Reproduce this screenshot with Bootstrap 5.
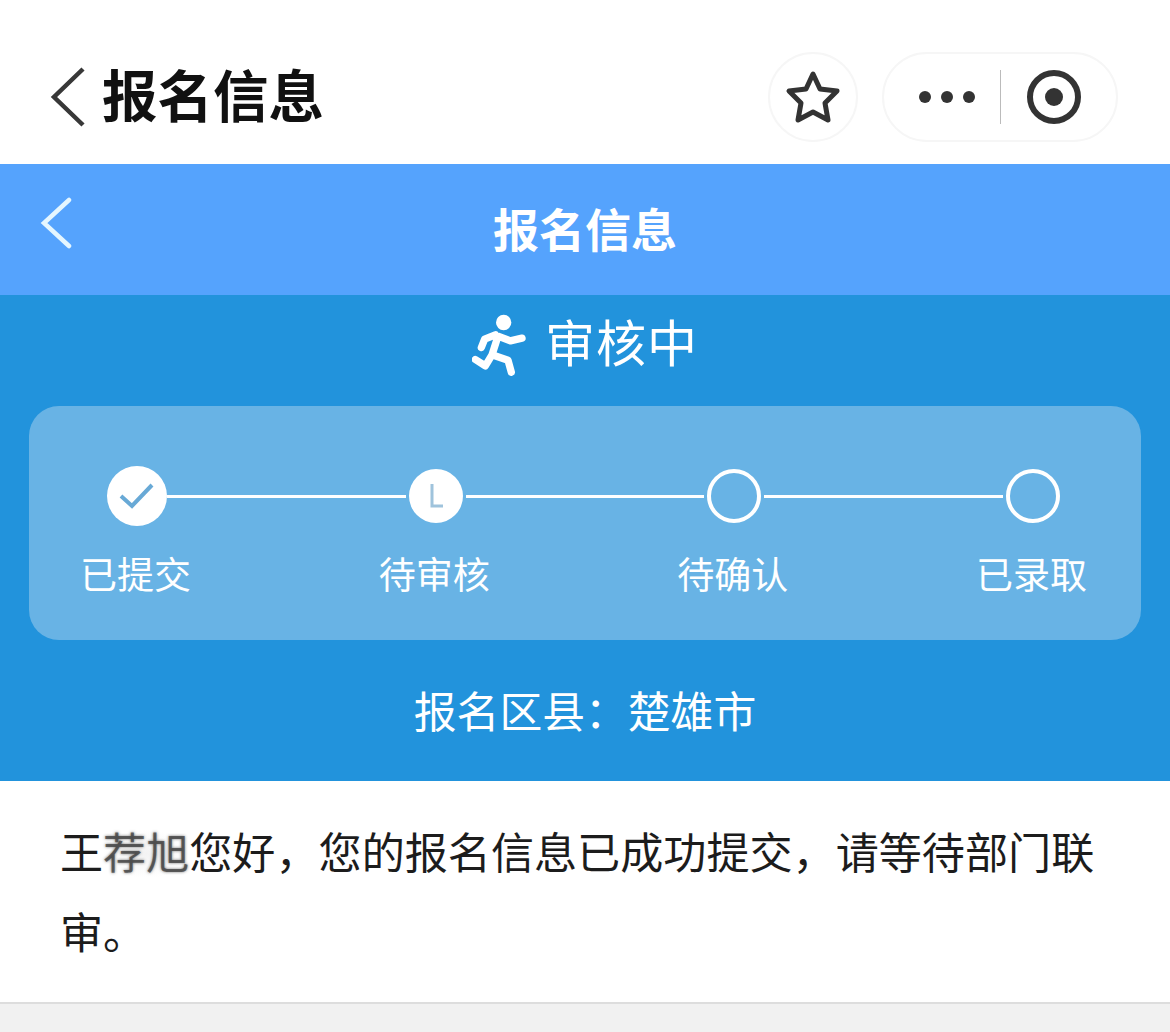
<!doctype html>
<html lang="zh-CN">
<head>
<meta charset="utf-8">
<title>报名信息</title>
<link href="https://cdn.jsdelivr.net/npm/bootstrap@5.3.0/dist/css/bootstrap.min.css" rel="stylesheet">
<style>
body{font-family:"Liberation Sans","Noto Sans CJK SC",sans-serif;color:#1c1c1c;background:#f1f1f1}
.wx-bar{height:164px;padding:30px 52px 0 50px;background:#fff}
.wx-back{width:36px;height:60px;margin-right:16px}
.wx-title{font-size:55.5px;line-height:66px;color:#111;margin-top:2px}
.wx-star{width:90px;height:90px;border:2px solid #f6f6f6;margin-right:24px}
.wx-capsule{width:236px;height:90px;border:2px solid #f6f6f6;border-radius:45px}
.hd-bar{height:131px;background:#55a3fd;display:grid;grid-template-columns:1fr auto 1fr;align-items:center}
.hd-title{font-size:46px;line-height:54px;padding-top:2px}
.hd-back{width:34px;height:52px;margin-top:-13px;margin-left:40px}
.st-panel{height:486px;background:#2293dc}
.st-head{height:111px;padding-bottom:12px;gap:18px;font-size:50px;line-height:60px;letter-spacing:1px}
.st-card{margin:0 29px;height:234px;border-radius:30px;background:#68b3e5;padding:60px 54px 0 51px}
.st-dots{height:60px;padding:0 27px;margin-bottom:29px}
.st-node{flex:none;width:60px;height:60px}
.st-node-sm{flex:none;width:54px;height:54px}
.st-ring{flex:none;width:54px;height:54px;border:4px solid #fff;background:transparent}
.st-line{flex:1 1 auto;height:3px;background:#fff;margin:0 3px}
.st-line-first{margin-left:0}
.st-labels{font-size:37px;line-height:44px}
.st-area{height:141px;padding-top:5px;font-size:42.8px;line-height:50px}
.msg{background:#fff;padding:33px 60px 29px 60px;font-size:43.1px;line-height:80px;height:223px;border-bottom:2px solid #ddd}
.msg-blur{color:rgba(60,60,60,.75);text-shadow:0 0 3px rgba(60,60,60,.7);background:radial-gradient(closest-side,#f3f3f3,#fff)}
.rest{background:#f1f1f1}
</style>
</head>
<body class="d-flex flex-column vh-100 overflow-hidden m-0">
<header class="wx-bar d-flex align-items-center justify-content-between flex-shrink-0">
  <div class="d-flex align-items-center">
    <svg class="wx-back" viewBox="0 0 36 60" fill="none" stroke="#383838" stroke-width="4.5"><path d="M33 2 4 30 33 58"/></svg>
    <span class="wx-title fw-bold">报名信息</span>
  </div>
  <div class="d-flex align-items-center">
    <div class="wx-star rounded-circle d-flex align-items-center justify-content-center">
      <svg width="56" height="54" viewBox="0 0 56 54" fill="none" stroke="#333" stroke-width="5" stroke-linejoin="round"><path d="M28 4 35 19 52 21 40 33 43 50 28 42 13 50 16 33 4 21 21 19Z"/></svg>
    </div>
    <div class="wx-capsule d-flex align-items-center">
      <svg width="232" height="56" viewBox="0 0 232 56" fill="#333"><circle cx="41" cy="28" r="6"/><circle cx="63" cy="28" r="6"/><circle cx="85" cy="28" r="6"/><rect x="116" y="1" width="1" height="54" fill="#bbb"/><circle cx="170" cy="28" r="24" fill="none" stroke="#333" stroke-width="6"/><circle cx="170" cy="28" r="9"/></svg>
    </div>
  </div>
</header>

<div class="hd-bar text-white flex-shrink-0">
  <svg class="hd-back" viewBox="0 0 34 52" fill="none" stroke="#e4f6ff" stroke-width="4.5" stroke-linecap="round"><path d="M29 3 4 26 29 49"/></svg>
  <div class="hd-title fw-bold">报名信息</div>
  <div></div>
</div>

<section class="st-panel text-white flex-shrink-0">
  <div class="st-head d-flex align-items-center justify-content-center">
    <svg width="55" height="62" viewBox="70 50 165 185" fill="none" stroke="#fff" stroke-width="22" stroke-linecap="round" stroke-linejoin="round"><circle cx="165" cy="75" r="23" fill="#fff" stroke="none"/><path d="M148 116 130 172M148 116 185 130 220 122M140 112 108 125 98 150M130 172 110 205 80 186M130 172 178 188 188 224"/></svg>
    <span>审核中</span>
  </div>
  <div class="st-card">
    <div class="st-dots d-flex align-items-center">
      <div class="st-node rounded-circle bg-white d-flex align-items-center justify-content-center">
        <svg width="36" height="28" viewBox="0 0 36 28" fill="none" stroke="#68a9d6" stroke-width="4"><path d="M2 14 13 24 33 3"/></svg>
      </div>
      <div class="st-line st-line-first"></div>
      <div class="st-node-sm rounded-circle bg-white d-flex align-items-center justify-content-center">
        <svg width="16" height="26" viewBox="0 0 16 26" fill="none" stroke="#9fc3dc" stroke-width="3"><path d="M4 1V23H15"/></svg>
      </div>
      <div class="st-line"></div>
      <div class="st-ring rounded-circle"></div>
      <div class="st-line"></div>
      <div class="st-ring rounded-circle"></div>
    </div>
    <div class="st-labels d-flex justify-content-between">
      <span>已提交</span><span>待审核</span><span>待确认</span><span>已录取</span>
    </div>
  </div>
  <div class="st-area d-flex align-items-center justify-content-center">报名区县：楚雄市</div>
</section>

<section class="msg flex-shrink-0"><div>王<span class="msg-blur">荐旭</span>您好，您的报名信息已成功提交，请等待部门联</div><div>审。</div></section>
<div class="rest flex-grow-1"></div>
</body>
</html>
